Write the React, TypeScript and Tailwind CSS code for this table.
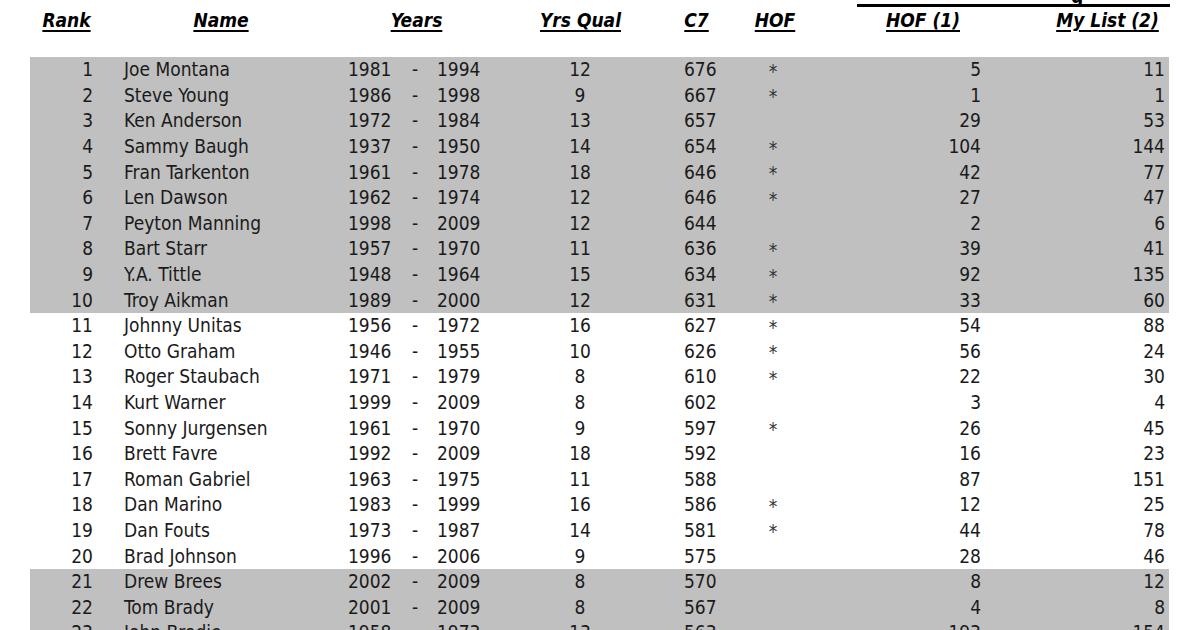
import React from "react";

type Row = [number, string, string, string, string, string, boolean, string, string];

const rows: Row[] = [
  [1, "Joe Montana", "1981", "1994", "12", "676", true, "5", "11"],
  [2, "Steve Young", "1986", "1998", "9", "667", true, "1", "1"],
  [3, "Ken Anderson", "1972", "1984", "13", "657", false, "29", "53"],
  [4, "Sammy Baugh", "1937", "1950", "14", "654", true, "104", "144"],
  [5, "Fran Tarkenton", "1961", "1978", "18", "646", true, "42", "77"],
  [6, "Len Dawson", "1962", "1974", "12", "646", true, "27", "47"],
  [7, "Peyton Manning", "1998", "2009", "12", "644", false, "2", "6"],
  [8, "Bart Starr", "1957", "1970", "11", "636", true, "39", "41"],
  [9, "Y.A. Tittle", "1948", "1964", "15", "634", true, "92", "135"],
  [10, "Troy Aikman", "1989", "2000", "12", "631", true, "33", "60"],
  [11, "Johnny Unitas", "1956", "1972", "16", "627", true, "54", "88"],
  [12, "Otto Graham", "1946", "1955", "10", "626", true, "56", "24"],
  [13, "Roger Staubach", "1971", "1979", "8", "610", true, "22", "30"],
  [14, "Kurt Warner", "1999", "2009", "8", "602", false, "3", "4"],
  [15, "Sonny Jurgensen", "1961", "1970", "9", "597", true, "26", "45"],
  [16, "Brett Favre", "1992", "2009", "18", "592", false, "16", "23"],
  [17, "Roman Gabriel", "1963", "1975", "11", "588", false, "87", "151"],
  [18, "Dan Marino", "1983", "1999", "16", "586", true, "12", "25"],
  [19, "Dan Fouts", "1973", "1987", "14", "581", true, "44", "78"],
  [20, "Brad Johnson", "1996", "2006", "9", "575", false, "28", "46"],
  [21, "Drew Brees", "2002", "2009", "8", "570", false, "8", "12"],
  [22, "Tom Brady", "2001", "2009", "8", "567", false, "4", "8"],
  [23, "John Brodie", "1958", "1973", "13", "563", false, "193", "154"],
];

const font = "font-['DejaVu_Sans_Condensed','DejaVu_Sans',sans-serif]";

function Header({ w, label }: { w: string; label: string }) {
  return (
    <div className={`${w} flex justify-center`}>
      <span className="font-bold italic underline decoration-[1.5px] underline-offset-[3px] text-black text-[19px] leading-none">
        {label}
      </span>
    </div>
  );
}

export default function App() {
  return (
    <div className={`w-[1200px] h-[630px] overflow-hidden bg-white ${font} text-[#1a1a1a]`}>
      {/* top rule with clipped title above */}
      <div className="flex pl-[857px]">
        <div className="w-[313px] flex flex-col">
          <div className="h-[4px] overflow-hidden relative">
            <span className="absolute left-[214px] bottom-[-2px] font-bold text-[19px] leading-none text-black">
              g
            </span>
          </div>
          <div className="h-[3px] bg-black" />
        </div>
      </div>
      {/* headers */}
      <div className="flex pl-[30px] pt-[4px] h-[50px]">
        <Header w="w-[73px]" label="Rank" />
        <Header w="w-[236px]" label="Name" />
        <Header w="w-[155px]" label="Years" />
        <Header w="w-[173px]" label="Yrs Qual" />
        <Header w="w-[59px]" label="C7" />
        <Header w="w-[98px]" label="HOF" />
        <Header w="w-[198px]" label="HOF (1)" />
        <Header w="w-[171px]" label="My List (2)" />
      </div>
      {/* body */}
      <div className="flex flex-col w-[1139px] ml-[30px]">
        {rows.map((r) => {
          const grey = r[0] <= 10 || r[0] >= 21;
          return (
            <div
              key={r[0]}
              className={`flex items-center h-[25.6px] text-[19px] leading-none ${grey ? "bg-[#c0c0c0]" : "bg-white"}`}
            >
              <div className="w-[63px] text-right">{r[0]}</div>
              <div className="w-[31px]" />
              <div className="w-[224px]">{r[1]}</div>
              <div className="w-[57px]">{r[2]}</div>
              <div className="w-[20px] text-center">-</div>
              <div className="w-[12px]" />
              <div className="w-[83px]">{r[3]}</div>
              <div className="w-[120px] text-center">{r[4]}</div>
              <div className="w-[44px]" />
              <div className="w-[76px]">{r[5]}</div>
              <div className="w-[26px] text-center text-[19px] text-[#333] pt-[3px]">{r[6] ? "*" : ""}</div>
              <div className="w-[195px] text-right">{r[7]}</div>
              <div className="w-[184px] text-right">{r[8]}</div>
            </div>
          );
        })}
      </div>
    </div>
  );
}
